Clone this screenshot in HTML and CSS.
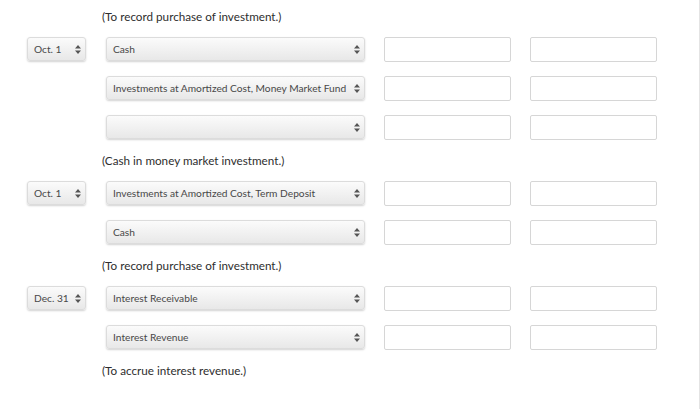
FILE: index.html
```html
<html lang="en">
  <head>
    <meta charset="UTF-8" />
    <meta name="viewport" content="width=device-width, initial-scale=1.0" />
    <title>Journal entries</title>
    <link rel="stylesheet" href="styles.css">
  </head>
  <body>
    <div class="page">
      <p class="note first">(To record purchase of investment.)</p>

      <div class="row">
        <div class="sel date"><span>Oct. 1</span><svg class="arr" width="6" height="9" viewBox="0 0 6 9"><path d="M3 0L6 3.5H0Z M3 9L6 5.5H0Z" fill="#555"/></svg></div>
        <div class="sel acct"><span>Cash</span><svg class="arr" width="6" height="9" viewBox="0 0 6 9"><path d="M3 0L6 3.5H0Z M3 9L6 5.5H0Z" fill="#555"/></svg></div>
        <div class="box"></div>
        <div class="box"></div>
      </div>
      <div class="row">
        <div class="blank"></div>
        <div class="sel acct"><span>Investments at Amortized Cost, Money Market Fund</span><svg class="arr" width="6" height="9" viewBox="0 0 6 9"><path d="M3 0L6 3.5H0Z M3 9L6 5.5H0Z" fill="#555"/></svg></div>
        <div class="box"></div>
        <div class="box"></div>
      </div>
      <div class="row">
        <div class="blank"></div>
        <div class="sel acct"><span></span><svg class="arr" width="6" height="9" viewBox="0 0 6 9"><path d="M3 0L6 3.5H0Z M3 9L6 5.5H0Z" fill="#555"/></svg></div>
        <div class="box"></div>
        <div class="box"></div>
      </div>

      <p class="note">(Cash in money market investment.)</p>

      <div class="row">
        <div class="sel date"><span>Oct. 1</span><svg class="arr" width="6" height="9" viewBox="0 0 6 9"><path d="M3 0L6 3.5H0Z M3 9L6 5.5H0Z" fill="#555"/></svg></div>
        <div class="sel acct"><span>Investments at Amortized Cost, Term Deposit</span><svg class="arr" width="6" height="9" viewBox="0 0 6 9"><path d="M3 0L6 3.5H0Z M3 9L6 5.5H0Z" fill="#555"/></svg></div>
        <div class="box"></div>
        <div class="box"></div>
      </div>
      <div class="row">
        <div class="blank"></div>
        <div class="sel acct"><span>Cash</span><svg class="arr" width="6" height="9" viewBox="0 0 6 9"><path d="M3 0L6 3.5H0Z M3 9L6 5.5H0Z" fill="#555"/></svg></div>
        <div class="box"></div>
        <div class="box"></div>
      </div>

      <p class="note">(To record purchase of investment.)</p>

      <div class="row">
        <div class="sel date"><span>Dec. 31</span><svg class="arr" width="6" height="9" viewBox="0 0 6 9"><path d="M3 0L6 3.5H0Z M3 9L6 5.5H0Z" fill="#555"/></svg></div>
        <div class="sel acct"><span>Interest Receivable</span><svg class="arr" width="6" height="9" viewBox="0 0 6 9"><path d="M3 0L6 3.5H0Z M3 9L6 5.5H0Z" fill="#555"/></svg></div>
        <div class="box"></div>
        <div class="box"></div>
      </div>
      <div class="row">
        <div class="blank"></div>
        <div class="sel acct"><span>Interest Revenue</span><svg class="arr" width="6" height="9" viewBox="0 0 6 9"><path d="M3 0L6 3.5H0Z M3 9L6 5.5H0Z" fill="#555"/></svg></div>
        <div class="box"></div>
        <div class="box"></div>
      </div>

      <p class="note">(To accrue interest revenue.)</p>
    </div>
  </body>
</html>
```

FILE: styles.css
```css
* {
  margin: 0;
  padding: 0;
  box-sizing: border-box;
}
body {
  background: #ffffff;
  font-family: Lato, "Open Sans", sans-serif;
  color: #333333;
}
.page {
  width: 700px;
  height: 409px;
  border-right: 1px solid #e4e4e4;
  display: flex;
  flex-direction: column;
  gap: 15px;
}
.note {
  font-size: 11.7px;
  line-height: 20px;
  padding-left: 102px;
  margin: -4px 0;
  color: #2e2e2e;
}
.note.first {
  margin-top: 6px;
}
.row {
  display: flex;
  align-items: center;
  height: 24px;
  padding-left: 27px;
}
.sel {
  height: 24px;
  display: flex;
  align-items: center;
  justify-content: space-between;
  padding: 0 4px 0 6px;
  background: linear-gradient(#fbfbfb, #e8e8e8);
  border: 1px solid #dcdcdc;
  border-radius: 3px;
  box-shadow: 0 1px 2px rgba(0, 0, 0, 0.18);
  font-size: 10.2px;
  color: #484848;
  white-space: nowrap;
}
.date {
  width: 59px;
}
.blank {
  width: 59px;
}
.acct {
  width: 259px;
  margin-left: 20px;
}
.arr {
  flex: none;
}
.box {
  width: 127px;
  height: 25px;
  margin-left: 19px;
  background: #ffffff;
  border: 1px solid #d6d6d6;
  border-radius: 2px;
}
```
